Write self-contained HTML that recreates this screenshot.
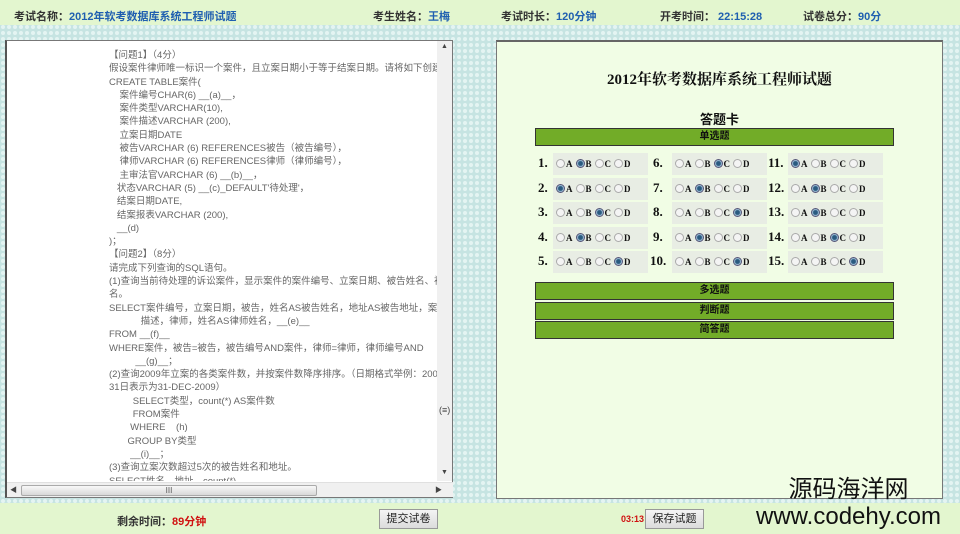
<!DOCTYPE html>
<html><head><meta charset="utf-8">
<style>
*{margin:0;padding:0;box-sizing:border-box}
body{width:960px;height:534px;overflow:hidden;position:relative;font-family:"Liberation Sans","Noto Sans CJK SC",sans-serif;
background-color:#c6e4e2;background-image:radial-gradient(circle at 3px 3px,#e4f4f2 1.8px,transparent 2.3px);background-size:6px 6px}
.hdr{position:absolute;left:0;top:0;width:960px;height:25px;background:#e3f6cf;font-size:11px;font-weight:bold;color:#333}
.hdr span,.ftr span{position:absolute;top:8px;white-space:nowrap}
.b{color:#1f5fb0}
.ftr{position:absolute;left:0;top:503px;width:960px;height:31px;background:#e3f6cf;font-size:11px;font-weight:bold;color:#333}
.r{color:#d01010}
.btn{position:absolute;top:6px;height:20px;border:1px solid #999;background:linear-gradient(#f4f4f4,#dcdcdc);font-size:11px;font-weight:normal;text-align:center;line-height:18px;color:#222}
.left{position:absolute;left:5px;top:40px;width:448px;height:458px;background:#fff;border:1px solid #777;border-left:2px solid #555}
.txt{position:absolute;left:102px;top:8px;width:334px;height:432px;overflow:hidden;font-size:9.5px;line-height:13.3px;color:#666;white-space:nowrap}
.vs{position:absolute;right:0;top:0;width:15px;height:440px;background:#f0f0f0}
.hs{position:absolute;left:0;bottom:0;width:446px;height:15px;background:#f0f0f0;border-top:1px solid #e0e0e0}
.thumb{position:absolute;left:14px;top:2px;width:296px;height:11px;border:1px solid #aaa;border-radius:2px;background:linear-gradient(#f8f8f8,#d8d8d8);font-size:8px;text-align:center;line-height:9px;color:#555}
.right{position:absolute;left:496px;top:40px;width:447px;height:459px;background:#f1fde5;border:1px solid #777;border-top:2px solid #666}
.title{position:absolute;left:0;width:100%;top:26px;text-align:center;font-family:"Liberation Serif","Noto Serif CJK SC",serif;font-size:15px;font-weight:bold;color:#111}
.card{position:absolute;left:0;width:100%;top:67px;text-align:center;font-size:13px;font-weight:bold;color:#111}
.bar{position:absolute;left:38px;width:359px;height:18px;background:#72ac28;border:1px solid #333;text-align:center;font-size:10px;font-weight:bold;line-height:16px;color:#111}
.q{position:absolute;height:22px;font-family:"Liberation Serif",serif;font-weight:bold;color:#111}
.n{position:absolute;font-size:13px;top:2px}
.g{position:absolute;left:15px;top:0;width:95px;height:22px;background:#e8ede4;font-size:9px;line-height:22px}
.g i{display:inline-block;width:9px;height:9px;border-radius:50%;border:1px solid #aaa;background:#f4f4f4;vertical-align:-1px;margin:0 1px 0 3px}
.g i.on{background:radial-gradient(circle,#2a5a80 2px,#9fc0d8 3px);border-color:#557}
.wm{position:absolute;left:756px;top:476px;font-size:24px;color:#111;text-align:center;line-height:27px;font-family:"Liberation Sans","Noto Sans CJK SC",sans-serif}
</style></head><body>
<div class="hdr">
<span style="left:14px">考试名称：<span class="b" style="position:static">2012年软考数据库系统工程师试题</span></span>
<span style="left:373px">考生姓名：<span class="b" style="position:static">王梅</span></span>
<span style="left:501px">考试时长：<span class="b" style="position:static">120分钟</span></span>
<span style="left:660px">开考时间：<span class="b" style="position:static">&nbsp;22:15:28</span></span>
<span style="left:803px">试卷总分：<span class="b" style="position:static">90分</span></span>
</div>

<div class="left">
<div class="txt">
【问题1】（4分）<br>
假设案件律师唯一标识一个案件，且立案日期小于等于结案日期。请将如下创建案件关系的SQL语句补充完整<br>
CREATE TABLE案件(<br>
&nbsp;&nbsp;&nbsp;&nbsp;案件编号CHAR(6) __(a)__，<br>
&nbsp;&nbsp;&nbsp;&nbsp;案件类型VARCHAR(10),<br>
&nbsp;&nbsp;&nbsp;&nbsp;案件描述VARCHAR (200),<br>
&nbsp;&nbsp;&nbsp;&nbsp;立案日期DATE<br>
&nbsp;&nbsp;&nbsp;&nbsp;被告VARCHAR (6) REFERENCES被告（被告编号），<br>
&nbsp;&nbsp;&nbsp;&nbsp;律师VARCHAR (6) REFERENCES律师（律师编号），<br>
&nbsp;&nbsp;&nbsp;&nbsp;主审法官VARCHAR (6) __(b)__，<br>
&nbsp;&nbsp;&nbsp;状态VARCHAR (5) __(c)_DEFAULT'待处理'，<br>
&nbsp;&nbsp;&nbsp;结案日期DATE,<br>
&nbsp;&nbsp;&nbsp;结案报表VARCHAR (200),<br>
&nbsp;&nbsp;&nbsp;__(d)<br>
)；<br>
【问题2】（8分）<br>
请完成下列查询的SQL语句。<br>
(1)查询当前待处理的诉讼案件，显示案件的案件编号、立案日期、被告姓名、被告地址、案件描述、律<br>
名。<br>
SELECT案件编号，立案日期，被告，姓名AS被告姓名，地址AS被告地址，案件<br>
&nbsp;&nbsp;&nbsp;&nbsp;&nbsp;&nbsp;&nbsp;&nbsp;&nbsp;&nbsp;&nbsp;&nbsp;描述，律师，姓名AS律师姓名，__(e)__<br>
FROM __(f)__<br>
WHERE案件，被告=被告，被告编号AND案件，律师=律师，律师编号AND<br>
&nbsp;&nbsp;&nbsp;&nbsp;&nbsp;&nbsp;&nbsp;&nbsp;&nbsp;&nbsp;__(g)__；<br>
(2)查询2009年立案的各类案件数，并按案件数降序排序。（日期格式举例：2009年1月1日表示为01-JA<br>
31日表示为31-DEC-2009）<br>
&nbsp;&nbsp;&nbsp;&nbsp;&nbsp;&nbsp;&nbsp;&nbsp;&nbsp;SELECT类型，count(*) AS案件数<br>
&nbsp;&nbsp;&nbsp;&nbsp;&nbsp;&nbsp;&nbsp;&nbsp;&nbsp;FROM案件<br>
&nbsp;&nbsp;&nbsp;&nbsp;&nbsp;&nbsp;&nbsp;&nbsp;WHERE&nbsp;&nbsp;&nbsp;&nbsp;(h)<br>
&nbsp;&nbsp;&nbsp;&nbsp;&nbsp;&nbsp;&nbsp;GROUP BY类型<br>
&nbsp;&nbsp;&nbsp;&nbsp;&nbsp;&nbsp;&nbsp;&nbsp;__(i)__；<br>
(3)查询立案次数超过5次的被告姓名和地址。<br>
SELECT姓名，地址，count(*)
</div>
<div class="vs"><span style="position:absolute;left:4px;top:2px;font-size:7px;color:#444">▲</span><span style="position:absolute;left:2px;top:364px;font-size:9px;color:#444">(≡)</span><span style="position:absolute;left:4px;top:428px;font-size:7px;color:#444">▼</span></div>
<div class="hs"><span style="position:absolute;left:3px;top:2px;font-size:7px;color:#444">◀</span><div class="thumb">III</div><span style="position:absolute;left:428px;top:2px;font-size:7px;color:#444">▶</span></div>
</div>

<div class="right">
<div class="title">2012年软考数据库系统工程师试题</div>
<div class="card">答题卡</div>
<div class="bar" style="top:86px">单选题</div>

<div class="q" style="left:41px;top:111px"><span class="n">1.</span><div class="g"><i></i>A<i class="on"></i>B<i></i>C<i></i>D</div></div>
<div class="q" style="left:41px;top:136px"><span class="n">2.</span><div class="g"><i class="on"></i>A<i></i>B<i></i>C<i></i>D</div></div>
<div class="q" style="left:41px;top:160px"><span class="n">3.</span><div class="g"><i></i>A<i></i>B<i class="on"></i>C<i></i>D</div></div>
<div class="q" style="left:41px;top:185px"><span class="n">4.</span><div class="g"><i></i>A<i class="on"></i>B<i></i>C<i></i>D</div></div>
<div class="q" style="left:41px;top:209px"><span class="n">5.</span><div class="g"><i></i>A<i></i>B<i></i>C<i class="on"></i>D</div></div>

<div class="q" style="left:156px;top:111px"><span class="n">6.</span><div class="g" style="left:19px"><i></i>A<i></i>B<i class="on"></i>C<i></i>D</div></div>
<div class="q" style="left:156px;top:136px"><span class="n">7.</span><div class="g" style="left:19px"><i></i>A<i class="on"></i>B<i></i>C<i></i>D</div></div>
<div class="q" style="left:156px;top:160px"><span class="n">8.</span><div class="g" style="left:19px"><i></i>A<i></i>B<i></i>C<i class="on"></i>D</div></div>
<div class="q" style="left:156px;top:185px"><span class="n">9.</span><div class="g" style="left:19px"><i></i>A<i class="on"></i>B<i></i>C<i></i>D</div></div>
<div class="q" style="left:153px;top:209px"><span class="n">10.</span><div class="g" style="left:22px"><i></i>A<i></i>B<i></i>C<i class="on"></i>D</div></div>

<div class="q" style="left:271px;top:111px"><span class="n">11.</span><div class="g" style="left:20px"><i class="on"></i>A<i></i>B<i></i>C<i></i>D</div></div>
<div class="q" style="left:271px;top:136px"><span class="n">12.</span><div class="g" style="left:20px"><i></i>A<i class="on"></i>B<i></i>C<i></i>D</div></div>
<div class="q" style="left:271px;top:160px"><span class="n">13.</span><div class="g" style="left:20px"><i></i>A<i class="on"></i>B<i></i>C<i></i>D</div></div>
<div class="q" style="left:271px;top:185px"><span class="n">14.</span><div class="g" style="left:20px"><i></i>A<i></i>B<i class="on"></i>C<i></i>D</div></div>
<div class="q" style="left:271px;top:209px"><span class="n">15.</span><div class="g" style="left:20px"><i></i>A<i></i>B<i></i>C<i class="on"></i>D</div></div>

<div class="bar" style="top:240px">多选题</div>
<div class="bar" style="top:260px">判断题</div>
<div class="bar" style="top:279px">简答题</div>
</div>

<div class="ftr">
<span style="left:117px;top:10px">剩余时间：<span class="r" style="position:static">89分钟</span></span>
<div class="btn" style="left:379px;width:59px">提交试卷</div>
<span class="r" style="left:621px;top:11px;font-size:9px">03:13</span>
<div class="btn" style="left:645px;width:59px">保存试题</div>
</div>
<div class="wm">源码海洋网<br>www.codehy.com</div>
</body></html>
